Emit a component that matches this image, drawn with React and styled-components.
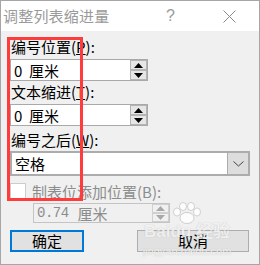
import React from 'react';
import styled, { createGlobalStyle } from 'styled-components';

const GlobalStyle = createGlobalStyle`
  body {
    margin: 0;
    background: #ffffff;
  }
`;

const Window = styled.div`
  position: relative;
  box-sizing: border-box;
  width: 260px;
  height: 265px;
  border: 1px solid #a6a6a6;
  background-color: #f0f0f0;
  font-family: "Noto Sans CJK SC", "Noto Sans", sans-serif;
  font-size: 15px;
  color: #000;
  overflow: hidden;
`;

const TitleBar = styled.div`
  height: 30px;
  background-color: #ffffff;
  display: flex;
  align-items: center;
  padding-left: 2px;
  color: #9a9a9a;
`;

const TitleText = styled.div`
  flex: 1;
  line-height: 20px;
  letter-spacing: 0.2px;
`;

const HelpGlyph = styled.div`
  width: 10px;
  font-family: "Liberation Sans", sans-serif;
  font-size: 16px;
  font-weight: 300;
  color: #9a9a9a;
  margin-right: 47px;
`;

const CloseBox = styled.div`
  width: 13px;
  height: 13px;
  margin-right: 23px;
  display: flex;
`;

const Body = styled.div`
  padding: 6px 9px 0 9px;
`;

const Label = styled.div`
  height: 20px;
  line-height: 20px;
  margin-top: ${p => p.$mt || 0}px;
  margin-bottom: ${p => p.$mb || 0}px;
  padding-left: 1px;
  white-space: pre;
  color: ${p => (p.$disabled ? '#8c8c8c' : '#000')};
`;

const Key = styled.span`
  text-decoration: underline;
`;

const SpinField = styled.div`
  box-sizing: border-box;
  display: flex;
  width: ${p => p.$w}px;
  height: ${p => p.$h}px;
  margin-left: ${p => p.$ml || 0}px;
  margin-top: ${p => p.$mt || 0}px;
  border: 1px solid ${p => (p.$disabled ? '#c4c4c4' : '#a9a9a9')};
  background-color: ${p => (p.$disabled ? '#f0f0f0' : '#ffffff')};
`;

const FieldText = styled.div`
  flex: 1;
  padding-left: 3px;
  white-space: pre;
  display: flex;
  align-items: center;
  color: ${p => (p.$disabled ? '#8c8c8c' : '#000')};
`;

const Digits = styled.span`
  font-family: "Liberation Mono", monospace;
  font-size: 14px;
  letter-spacing: -0.5px;
  margin-right: 9px;
`;

const SpinColumn = styled.div`
  width: 17px;
  display: flex;
  flex-direction: column;
`;

const SpinButton = styled.div`
  flex: 1;
  box-sizing: border-box;
  border: 1px solid ${p => (p.$disabled ? '#d0d0d0' : '#b4b4b4')};
  background-color: ${p => (p.$disabled ? '#f0f0f0' : '#e6e6e6')};
  display: flex;
  align-items: center;
  justify-content: center;
`;

const Select = styled.div`
  box-sizing: border-box;
  display: flex;
  width: 240px;
  height: 25px;
  border: 2px solid #acacac;
  background-color: #ffffff;
`;

const SelectText = styled.div`
  flex: 1;
  padding-left: 3px;
  line-height: 21px;
`;

const SelectButton = styled.div`
  width: 20px;
  border-left: 1px solid #acacac;
  background-color: #dddddd;
  display: flex;
  align-items: center;
  justify-content: center;
`;

const CheckRow = styled.div`
  display: flex;
  align-items: center;
  height: 16px;
  margin-top: 7px;
  gap: 6px;
  color: #8c8c8c;
`;

const CheckBox = styled.div`
  box-sizing: border-box;
  width: 16px;
  height: 16px;
  border: 1px solid #cccccc;
  background-color: #ffffff;
`;

const ButtonRow = styled.div`
  display: flex;
  margin-top: 7px;
  gap: 53px;
`;

const Button = styled.div`
  box-sizing: border-box;
  width: ${p => p.$w}px;
  height: 22px;
  border: ${p => (p.$primary ? '2px solid #0078d7' : '1px solid #adadad')};
  background-color: #e1e1e1;
  display: flex;
  align-items: center;
  justify-content: center;
  line-height: 18px;
`;

const Highlight = styled.div`
  position: absolute;
  left: 6px;
  top: 36px;
  width: 76px;
  height: 164px;
  box-sizing: border-box;
  border: 3px solid #ff3b3b;
  pointer-events: none;
`;

const Watermark = styled.div`
  position: absolute;
  left: 140px;
  top: 201px;
  width: 92px;
  display: flex;
  flex-direction: column;
  align-items: center;
  color: rgba(255, 255, 255, 0.8);
  text-shadow: 0 0 1px rgba(140, 140, 140, 0.55);
  pointer-events: none;
`;

const MarkBig = styled.div`
  font-family: "Liberation Sans", "Noto Sans CJK SC", sans-serif;
  font-weight: bold;
  font-size: 17px;
  line-height: 16px;
  white-space: pre;
`;

const MarkSmall = styled.div`
  margin-top: 6px;
  font-family: "Liberation Sans", sans-serif;
  font-size: 11px;
  line-height: 10px;
`;

const Arrow = ({ up, color }) => (
  <svg width="9" height="5" viewBox="0 0 9 5">
    {up ? <polygon points="0,5 9,5 4.5,0" fill={color} /> : <polygon points="0,0 9,0 4.5,5" fill={color} />}
  </svg>
);

const Spinner = ({ disabled }) => {
  const c = disabled ? '#a8a8a8' : '#000';
  return (
    <SpinColumn>
      <SpinButton $disabled={disabled}><Arrow up color={c} /></SpinButton>
      <SpinButton $disabled={disabled}><Arrow color={c} /></SpinButton>
    </SpinColumn>
  );
};

const Paw = () => (
  <svg width="30" height="22" viewBox="0 0 30 22">
    <g fill="rgba(255,255,255,0.85)" stroke="rgba(150,150,150,0.5)" strokeWidth="0.8">
      <ellipse cx="5" cy="10" rx="3.5" ry="4" />
      <ellipse cx="11" cy="4.5" rx="3.5" ry="4" />
      <ellipse cx="19" cy="4.5" rx="3.5" ry="4" />
      <ellipse cx="25" cy="10" rx="3.5" ry="4" />
      <ellipse cx="15" cy="16" rx="7" ry="5.5" />
    </g>
  </svg>
);

export default function App() {
  return (
    <>
      <GlobalStyle />
      <Window>
        <TitleBar>
          <TitleText>调整列表缩进量</TitleText>
          <HelpGlyph>?</HelpGlyph>
          <CloseBox>
            <svg width="13" height="13" viewBox="0 0 13 13">
              <path d="M0.5 0.5 L12.5 12.5 M12.5 0.5 L0.5 12.5" stroke="#8a8a8a" strokeWidth="1" />
            </svg>
          </CloseBox>
        </TitleBar>
        <Body>
          <Label $mb={2}>编号位置(<Key>P</Key>):</Label>
          <SpinField $w={138} $h={22}>
            <FieldText>0  厘米</FieldText>
            <Spinner />
          </SpinField>

          <Label $mt={1} $mb={2}>文本缩进(<Key>T</Key>):</Label>
          <SpinField $w={138} $h={22}>
            <FieldText>0  厘米</FieldText>
            <Spinner />
          </SpinField>

          <Label $mt={4} $mb={1}>编号之后(<Key>W</Key>):</Label>
          <Select>
            <SelectText>空格</SelectText>
            <SelectButton>
              <svg width="11" height="6" viewBox="0 0 11 6">
                <path d="M0.5 0.5 L5.5 5 L10.5 0.5" stroke="#444" strokeWidth="1" fill="none" />
              </svg>
            </SelectButton>
          </Select>

          <CheckRow>
            <CheckBox />
            <span>制表位添加位置(B):</span>
          </CheckRow>
          <SpinField $w={137} $h={20} $ml={23} $mt={4} $disabled>
            <FieldText $disabled><Digits>0.74</Digits>厘米</FieldText>
            <Spinner disabled />
          </SpinField>

          <ButtonRow>
            <Button $w={74} $primary>确定</Button>
            <Button $w={112}>取消</Button>
          </ButtonRow>
        </Body>
        <Highlight />
        <Watermark>
          <Paw />
          <MarkBig>Baidu 经验</MarkBig>
          <MarkSmall>jingyan.baidu.com</MarkSmall>
        </Watermark>
      </Window>
    </>
  );
}
